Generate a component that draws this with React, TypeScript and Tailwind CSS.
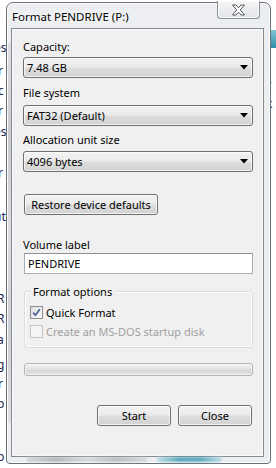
import React from "react";

function Combo({ value }: { value: string }) {
  return (
    <div className="relative flex h-[21px] w-full items-center rounded-[3px] border border-[#707070] bg-[linear-gradient(to_bottom,#f2f2f2_0%,#ebebeb_48%,#dddddd_52%,#d3d3d3_100%)] pl-[3px] shadow-[inset_0_0_0_1px_rgba(255,255,255,0.7)]">
      <span className="leading-[15px]">{value}</span>
      <svg className="absolute right-[4px] top-[7px]" width="8" height="5" viewBox="0 0 8 5">
        <polygon points="0,0 8,0 4,4.5" fill="#000" />
      </svg>
    </div>
  );
}

function Button({ children, className }: { children: React.ReactNode; className?: string }) {
  return (
    <div
      className={
        "flex h-[21px] items-center justify-center rounded-[3px] border border-[#707070] bg-[linear-gradient(to_bottom,#f2f2f2_0%,#ebebeb_48%,#dddddd_52%,#d3d3d3_100%)] leading-[15px] shadow-[inset_0_0_0_1px_rgba(255,255,255,0.7)] " +
        (className ?? "")
      }
    >
      {children}
    </div>
  );
}

function Check({ checked, disabled, label }: { checked?: boolean; disabled?: boolean; label: string }) {
  return (
    <div className="flex h-[13px] items-center gap-[3px]">
      <div
        className={
          "relative h-[13px] w-[13px] shrink-0 border " +
          (disabled
            ? "border-[#c5c5c5] bg-[#f4f4f4]"
            : "border-[#8e8f8f] bg-[linear-gradient(135deg,#dcdcdc,#fcfcfc)]")
        }
      >
        {checked && (
          <svg className="absolute left-[1px] top-[1px]" width="9" height="9" viewBox="0 0 9 9">
            <path d="M1.2 4.6 L3.5 7.2 L7.8 1.2" fill="none" stroke="#4a5f97" strokeWidth="1.7" />
          </svg>
        )}
      </div>
      <span className={"leading-[15px] " + (disabled ? "text-[#a0a0a0]" : "text-black")}>{label}</span>
    </div>
  );
}

export default function App() {
  return (
    <div className="relative h-[468px] w-[276px] overflow-hidden bg-white font-['Noto_Sans',sans-serif] text-[11px] text-black">
      {/* desktop fragments behind the window */}
      <div className="absolute left-0 top-0 h-full w-[8px] text-[12px] leading-[15px] text-[#1d2550]">
        <span className="absolute left-[-6px] top-[40px]">es</span>
        <span className="absolute left-[-2px] top-[63px]">r</span>
        <span className="absolute left-[-2px] top-[83px]">c</span>
        <span className="absolute left-[-2px] top-[103px]">r</span>
        <span className="absolute left-[-6px] top-[124px]">es</span>
        <span className="absolute left-[-2px] top-[165px]">r</span>
        <span className="absolute left-[-6px] top-[209px]">ut</span>
        <span className="absolute left-[-3px] top-[291px]">R</span>
        <span className="absolute left-[-3px] top-[311px]">R</span>
        <span className="absolute left-[-3px] top-[332px]">a</span>
        <span className="absolute left-[-3px] top-[357px]">g</span>
        <span className="absolute left-[-2px] top-[376px]">r</span>
        <span className="absolute left-[-3px] top-[396px]">p</span>
        <span className="absolute left-[-3px] top-[449px]">p</span>
      </div>
      <div className="absolute right-0 top-[30px] h-[18px] w-[6px] bg-[linear-gradient(to_bottom,#7fc3d3,#2f8fa8)]" />
      <span className="absolute left-[265px] top-[73px] text-[12px] leading-[15px] text-[#2a3a8a]">S</span>
      <span className="absolute left-[266px] top-[96px] text-[12px] leading-[15px] text-[#1d2550]">k</span>

      {/* window */}
      <div className="absolute left-[6px] top-[2px] flex h-[462px] w-[265px] flex-col rounded-t-[7px] rounded-b-[4px] border border-[#6b7078] bg-[#eceef1] pl-[4px] pr-[6px] pb-[6px] shadow-[inset_0_0_0_1px_rgba(255,255,255,0.8)]">
        {/* glass streak */}
        <div className="pointer-events-none absolute left-[1px] top-[40px] h-[380px] w-[3px] bg-[linear-gradient(to_bottom,#d8dadd,#b9bcc0,#d5d7da,#bfc2c6,#d8dadd)] opacity-70" />
        <div className="pointer-events-none absolute bottom-[1px] left-[150px] h-[5px] w-[65px] bg-[linear-gradient(to_right,#b9dbe3,#3d9cb3,#3d9cb3,#b9dbe3)] opacity-80 blur-[1px]" />
        <div className="pointer-events-none absolute bottom-[1px] left-[20px] h-[5px] w-[120px] bg-[linear-gradient(to_right,#c9cbce,#9fa2a6,#d2d4d7,#a7aaae,#cfd1d4)] opacity-70 blur-[1px]" />

        {/* title bar */}
        <div className="relative flex h-[25px] shrink-0 items-center">
          <span className="ml-[1px] mt-[2px] text-[11.5px] leading-[15px] text-black [text-shadow:0_0_6px_#fff,0_0_3px_#fff]">
            Format PENDRIVE (P:)
          </span>
          <div className="absolute right-[4px] top-[-2px] flex h-[18px] w-[43px] items-center justify-center rounded-b-[4px] border border-t-0 border-[#8a8f96] bg-[linear-gradient(to_bottom,#f4f5f6,#e3e5e8)] shadow-[inset_0_0_0_1px_rgba(255,255,255,0.8)]">
            <svg width="15" height="12" viewBox="0 0 15 12">
              <path
                d="M1.5 1 L5 1 L7.5 3.8 L10 1 L13.5 1 L9.3 6 L13.5 11 L10 11 L7.5 8.2 L5 11 L1.5 11 L5.7 6 Z"
                fill="#fdfdfd"
                stroke="#55595f"
                strokeWidth="1"
                strokeLinejoin="round"
              />
            </svg>
          </div>
        </div>

        {/* client area */}
        <div className="flex min-h-0 flex-1 flex-col border border-[#848a92] bg-[#f0f0f0] pl-[11px] pr-[10px] pt-[10px] shadow-[inset_0_0_0_1px_#fafafa]">
          <span className="leading-[15px]">Capacity:</span>
          <div className="mt-[3px]">
            <Combo value="7.48 GB" />
          </div>
          <span className="mt-[7px] leading-[15px]">File system</span>
          <div className="mt-[5px]">
            <Combo value="FAT32 (Default)" />
          </div>
          <span className="mt-[6px] leading-[15px]">Allocation unit size</span>
          <div className="mt-[4px]">
            <Combo value="4096 bytes" />
          </div>
          <Button className="ml-[1px] mt-[22px] w-[134px]">Restore device defaults</Button>

          <span className="mt-[22px] leading-[15px]">Volume label</span>
          <div className="ml-[1px] mt-[1px] flex h-[21px] items-center border border-[#abadb3] border-t-[#8e9196] bg-white pl-[3px] leading-[15px]">
            PENDRIVE
          </div>

          <div className="relative ml-[1px] mt-[17px] h-[57px] rounded-[3px] border border-[#d5dfe5] shadow-[inset_0_0_0_1px_#fff]">
            <span className="absolute left-[6px] top-[-8px] bg-[#f0f0f0] px-[2px] leading-[15px]">Format options</span>
            <div className="flex flex-col gap-[6px] pl-[5px] pt-[14px]">
              <Check checked label="Quick Format" />
              <Check disabled label="Create an MS-DOS startup disk" />
            </div>
          </div>

          <div className="ml-[1px] mt-[15px] h-[13px] rounded-[3px] border border-[#b2b2b2] bg-[linear-gradient(to_bottom,#f3f3f3,#e0e0e0_50%,#d6d6d6_55%,#e2e2e2)] shadow-[inset_0_0_0_1px_rgba(255,255,255,0.6)]" />

          <div className="mt-[29px] flex justify-end gap-[7px] pr-[1px]">
            <Button className="w-[74px]">Start</Button>
            <Button className="w-[74px]">Close</Button>
          </div>
        </div>
      </div>
    </div>
  );
}
